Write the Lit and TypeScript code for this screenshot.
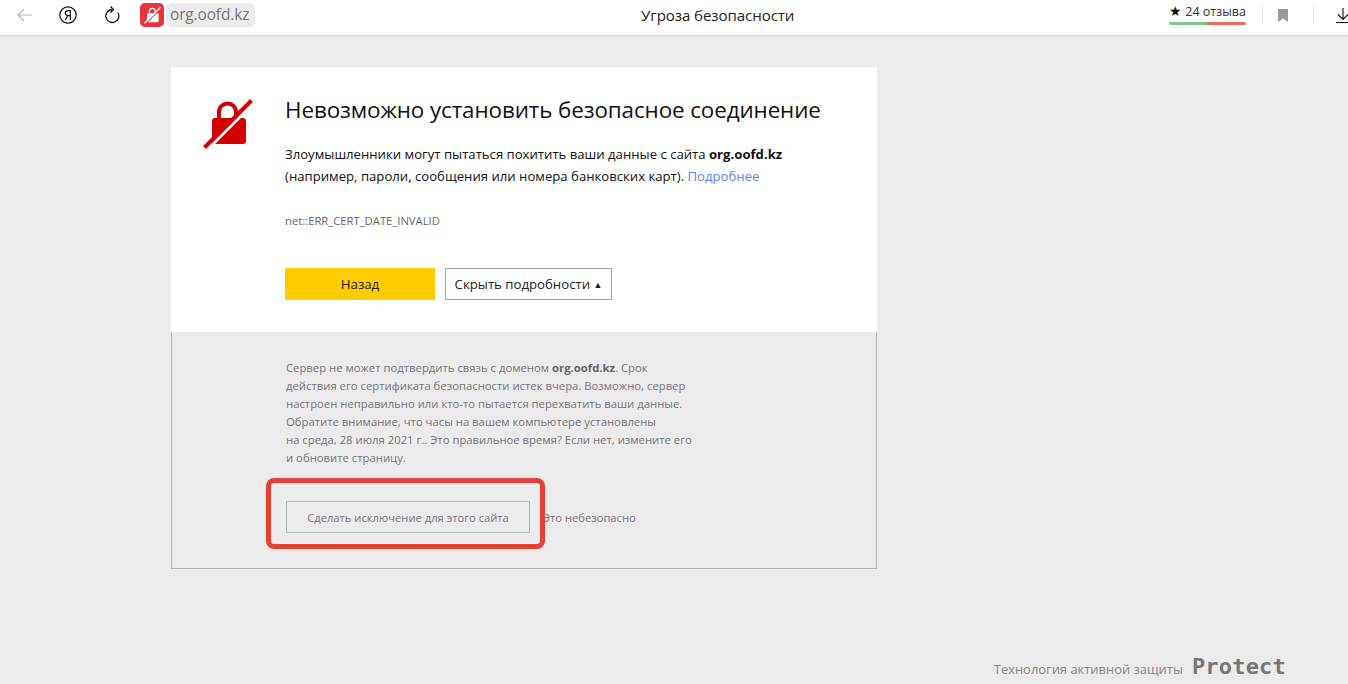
import { LitElement, html, css } from 'lit';
import { customElement } from 'lit/decorators.js';

@customElement('app-root')
export class AppRoot extends LitElement {
  static styles = css`
    :host {
      display: block;
      height: 684px;
      overflow: hidden;
      background: #ebebeb;
      font-family: 'Open Sans', 'Noto Sans', sans-serif;
    }

    .topbar {
      display: flex;
      align-items: center;
      height: 30px;
      padding-bottom: 5px;
      background: #fff;
      border-bottom: 1px solid #d8d8d8;
      overflow: hidden;
    }

    .nav {
      display: flex;
      align-items: center;
      padding-left: 17px;
      flex: none;
    }

    .nav svg {
      display: block;
      flex: none;
    }

    .back { margin-right: 27px; }
    .ya { margin-right: 28px; }
    .reload { margin-right: 20px; }

    .shield {
      width: 24px;
      height: 24px;
      border-radius: 5px;
      background: #e9343f;
      display: flex;
      align-items: center;
      justify-content: center;
      margin-right: 2px;
    }

    .host-pill {
      height: 24px;
      line-height: 24px;
      padding: 0 6px 0 4px;
      border-radius: 6px;
      background: #ececec;
      color: #777;
      font-size: 15.4px;
      letter-spacing: -0.1px;
    }

    .page-title {
      flex: 1;
      text-align: center;
      padding-left: 11px;
      font-size: 15.1px;
      color: #222;
      letter-spacing: -0.1px;
    }

    .tools {
      display: flex;
      align-items: center;
      flex: none;
      width: 179px;
      height: 100%;
    }

    .reviews {
      width: 77px;
      height: 22px;
      margin-bottom: 5px;
      font-size: 12.5px;
      line-height: 18px;
      color: #333;
      text-align: center;
      white-space: nowrap;
    }

    .star { color: #111; font-size: 14px; }

    .rating-bar {
      display: flex;
      height: 3px;
      border-radius: 2px;
      overflow: hidden;
      margin-top: 1px;
    }

    .rating-bar .good { width: 38px; background: #7ac993; }
    .rating-bar .bad { flex: 1; background: #ef6a58; }

    .sep {
      width: 1px;
      height: 16px;
      background: #e2e2e2;
      flex: none;
    }

    .first-sep { margin-left: 16px; }
    .bookmark { margin: 0 25px 0 15px; flex: none; }
    .download { margin-left: 22px; flex: none; }

    .content {
      position: relative;
      width: 706px;
      margin: 31px 0 0 171px;
    }

    .card {
      background: #fff;
      height: 265px;
      box-sizing: border-box;
      display: flex;
      padding: 29px 0 0 32px;
    }

    .lock {
      flex: none;
      width: 50px;
      height: 52px;
      margin: 1px 32px 0 0;
    }

    h1 {
      margin: 0;
      font-size: 22.4px;
      line-height: 28px;
      font-weight: 400;
      color: #111;
      letter-spacing: -0.1px;
    }

    .message {
      margin: 19px 0 0;
      font-size: 13.15px;
      line-height: 22px;
      color: #111;
    }

    .link { color: #5b82f0; }

    .code {
      margin: 26px 0 0;
      font-size: 11.25px;
      line-height: 16px;
      color: #666;
    }

    .actions {
      display: flex;
      gap: 10px;
      margin-top: 39px;
    }

    button {
      font-family: inherit;
      font-size: 13.2px;
      height: 32px;
      padding: 0;
      box-sizing: border-box;
      color: #222;
    }

    .primary {
      width: 150px;
      background: #ffcc00;
      border: none;
    }

    .secondary {
      width: 167px;
      background: #fff;
      border: 1px solid #a8a8a8;
      white-space: nowrap;
    }

    .arrow { font-size: 9px; vertical-align: 1px; }

    .details {
      height: 237px;
      box-sizing: border-box;
      border: 1px solid #b4b4b4;
      border-top: none;
      padding: 27px 0 0 114px;
    }

    .details p {
      margin: 0;
      width: 440px;
      font-size: 11.3px;
      line-height: 18px;
      color: #777;
    }

    .details b { color: #666; }

    .exception {
      display: flex;
      align-items: center;
      margin-top: 34px;
      font-size: 11.2px;
      color: #777;
    }

    .ghost {
      width: 244px;
      height: 32px;
      margin-right: 13px;
      background: transparent;
      border: 1px solid #b8b8b8;
      font-size: 11.2px;
      color: #777;
    }

    .highlight {
      position: absolute;
      left: 95px;
      top: 411px;
      width: 279px;
      height: 71px;
      box-sizing: border-box;
      border: 5px solid #e83f33;
      border-radius: 8px;
    }

    .protect {
      position: absolute;
      right: 62px;
      bottom: 5px;
      display: flex;
      align-items: baseline;
      gap: 9px;
      font-size: 12.95px;
      color: #888;
    }

    .protect strong {
      font-family: 'DejaVu Sans Mono', monospace;
      font-size: 22px;
      font-weight: 700;
      line-height: 24px;
      color: #777;
      letter-spacing: 0.2px;
    }
  `;

  lockIcon(fg: string, gap: string, cls: string, w: number, h: number) {
    return html`
      <svg class=${cls} width=${w} height=${h} viewBox="0 0 50 52" fill="none">
        <rect x="9" y="21" width="34" height="26" rx="3" fill=${fg} />
        <path d="M16 22v-7c0-5 4-8.500 8.500-8.500S33 10 33 15v7" stroke=${fg} stroke-width="4" />
        <path d="M7 50L50 7" stroke=${gap} stroke-width="3" />
        <path d="M1.500 50.500L48.500 3.500" stroke=${fg} stroke-width="4" />
      </svg>
    `;
  }

  render() {
    return html`
      <div class="topbar">
        <div class="nav">
          <svg class="back" width="15" height="14" viewBox="0 0 15 14" fill="none" stroke="#b4b4b4" stroke-width="1.2">
            <path d="M15 7H1M7 1L1 7l6 6" />
          </svg>
          <svg class="ya" width="18" height="18" viewBox="0 0 18 18" fill="none" stroke="#111" stroke-width="1.2">
            <circle cx="9" cy="9" r="8.200" />
            <path d="M11.300 14V4.600H9.200C7.500 4.600 6.300 5.600 6.300 7.100S7.500 9.600 9.200 9.600h2.100M8.800 9.600L6.200 14" />
          </svg>
          <svg class="reload" width="15" height="18" viewBox="0 0 15 18" fill="none" stroke="#111" stroke-width="1.300">
            <path d="M7 3.500A6.500 6.500 0 1 0 12.800 6.500M5.500 0.500L8.500 3.500L5.500 6.500" />
          </svg>
          <div class="shield">${this.lockIcon('#fff', '#e9343f', '', 17, 18)}</div>
          <div class="host-pill">org.oofd.kz</div>
        </div>
        <div class="page-title">Угроза безопасности</div>
        <div class="tools">
          <div class="reviews">
            <span class="star">★</span> 24 отзыва
            <div class="rating-bar"><span class="good"></span><span class="bad"></span></div>
          </div>
          <span class="sep first-sep"></span>
          <svg class="bookmark" width="10" height="13" viewBox="0 0 10 13"><path fill="#9a9a9a" d="M0 0h10v13L5 9.500 0 13z" /></svg>
          <span class="sep"></span>
          <svg class="download" width="14" height="15" viewBox="0 0 14 15" fill="none" stroke="#111" stroke-width="1.100">
            <path d="M7 0v11M2 6.500L7 11.500l5-5M0 14.500h14" />
          </svg>
        </div>
      </div>

      <div class="content">
        <div class="card">
          ${this.lockIcon('#d40000', '#fff', 'lock', 50, 52)}
          <div>
            <h1>Невозможно установить безопасное соединение</h1>
            <p class="message">
              Злоумышленники могут пытаться похитить ваши данные с сайта <b>org.oofd.kz</b><br />
              (например, пароли, сообщения или номера банковских карт). <span class="link">Подробнее</span>
            </p>
            <p class="code">net::ERR_CERT_DATE_INVALID</p>
            <div class="actions">
              <button class="primary">Назад</button>
              <button class="secondary">Скрыть подробности <span class="arrow">▲</span></button>
            </div>
          </div>
        </div>
        <div class="details">
          <p>
            Сервер не может подтвердить связь с доменом <b>org.oofd.kz</b>. Срок<br />
            действия его сертификата безопасности истек вчера. Возможно, сервер<br />
            настроен неправильно или кто-то пытается перехватить ваши данные.<br />
            Обратите внимание, что часы на вашем компьютере установлены<br />
            на среда, 28 июля 2021 г.. Это правильное время? Если нет, измените его<br />
            и обновите страницу.
          </p>
          <div class="exception">
            <button class="ghost">Сделать исключение для этого сайта</button>
            <span>Это небезопасно</span>
          </div>
        </div>
        <div class="highlight"></div>
      </div>

      <div class="protect">Технология активной защиты <strong>Protect</strong></div>
    `;
  }
}
